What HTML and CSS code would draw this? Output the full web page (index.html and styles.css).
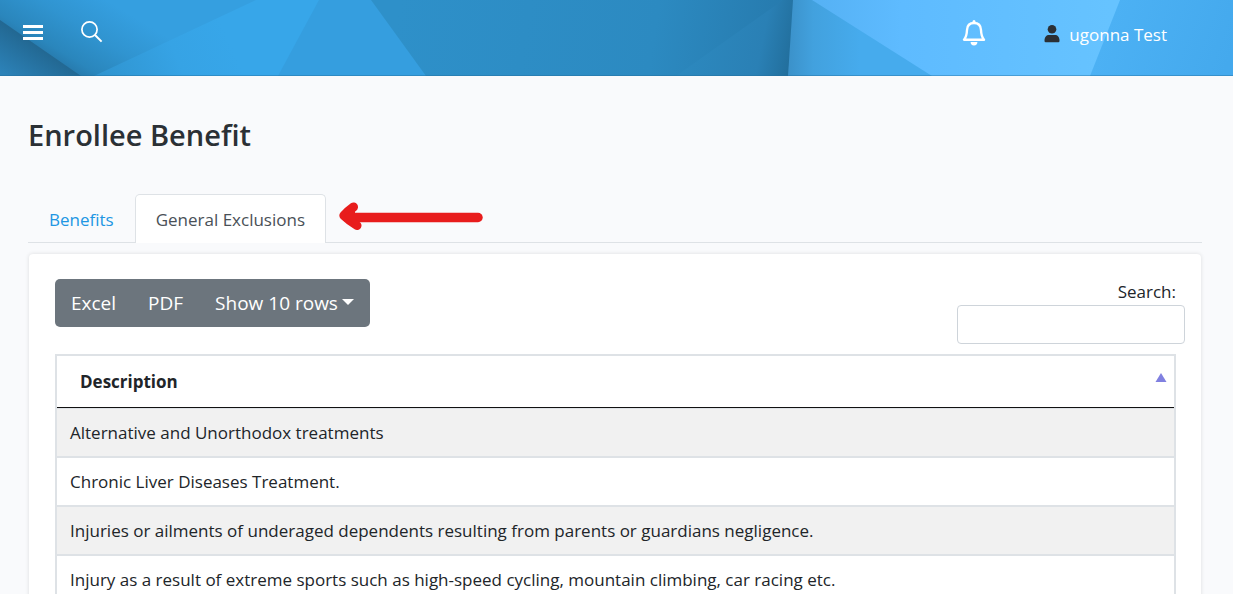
FILE: index.html
```html
<!DOCTYPE html>
<html lang="en">
<head>
<meta charset="utf-8">
<meta name="viewport" content="width=device-width, initial-scale=1">
<title>Enrollee Benefit</title>
<link rel="stylesheet" href="styles.css">
</head>
<body>
<header class="topbar">
  <svg class="topbar-art" viewBox="0 0 1233 76" preserveAspectRatio="none" aria-hidden="true">
    <defs>
      <linearGradient id="left" gradientUnits="userSpaceOnUse" x1="35" y1="62" x2="82" y2="-15">
        <stop offset="0" stop-color="#246e9d"/><stop offset=".25" stop-color="#2a86bc"/><stop offset=".6" stop-color="#3094d0"/><stop offset="1" stop-color="#359fe0"/>
      </linearGradient>
      <linearGradient id="corner" gradientUnits="userSpaceOnUse" x1="40" y1="46" x2="16" y2="82">
        <stop offset="0" stop-color="#226791"/><stop offset="1" stop-color="#2c82b8"/>
      </linearGradient>
      <linearGradient id="bright" gradientUnits="userSpaceOnUse" x1="95" y1="76" x2="220" y2="20">
        <stop offset="0" stop-color="#2f93ce"/><stop offset=".6" stop-color="#36a3e5"/><stop offset="1" stop-color="#37a6e9"/>
      </linearGradient>
      <linearGradient id="mid" gradientUnits="userSpaceOnUse" x1="400" y1="0" x2="790" y2="60">
        <stop offset="0" stop-color="#2e90c9"/><stop offset=".65" stop-color="#2c8ac1"/><stop offset="1" stop-color="#2679ac"/>
      </linearGradient>
      <linearGradient id="fold" gradientUnits="userSpaceOnUse" x1="690" y1="40" x2="790" y2="60">
        <stop offset="0" stop-color="#2c88be"/><stop offset=".7" stop-color="#2a80b5"/><stop offset="1" stop-color="#226f9d"/>
      </linearGradient>
      <linearGradient id="right" gradientUnits="userSpaceOnUse" x1="788" y1="0" x2="860" y2="0">
        <stop offset="0" stop-color="#3b91c9"/><stop offset=".35" stop-color="#42a1de"/><stop offset="1" stop-color="#46abed"/>
      </linearGradient>
      <linearGradient id="sky" gradientUnits="userSpaceOnUse" x1="812" y1="0" x2="1110" y2="0">
        <stop offset="0" stop-color="#55b1f4"/><stop offset=".3" stop-color="#5ebbff"/><stop offset="1" stop-color="#66c3ff"/>
      </linearGradient>
      <linearGradient id="far" gradientUnits="userSpaceOnUse" x1="1100" y1="0" x2="1233" y2="50">
        <stop offset="0" stop-color="#4db2f5"/><stop offset="1" stop-color="#44a9ed"/>
      </linearGradient>
    </defs>
    <path fill="url(#left)" d="M0 0H320V76H0Z"/>
    <path fill="url(#corner)" d="M0 20L81 76H0Z"/>
    <path fill="url(#bright)" d="M256 0H330V76H94Z"/>
    <path fill="#359edf" d="M319 0H390L440 76H278Z"/>
    <path fill="url(#mid)" d="M371 0H794L789 76H426Z"/>
    <path fill="url(#fold)" d="M783 0H794L789 76H676Z"/>
    <path fill="url(#right)" d="M793 0H1233V76H788Z"/>
    <path fill="url(#sky)" d="M812 0H1120V76H932Z"/>
    <path fill="url(#far)" d="M1120 0H1233V76H1090Z"/>
    <path fill="#246b98" fill-opacity=".4" d="M0 75H1233V76H0Z"/>
  </svg>
  <div class="topbar-group">
    <button class="icon-button" type="button" aria-label="Menu">
      <svg width="20" height="16" viewBox="0 0 20 16" fill="#fff"><path d="M0 0H20V3H0ZM0 6H20V9H0ZM0 12H20V15H0Z"/></svg>
    </button>
    <button class="icon-button" type="button" aria-label="Search">
      <svg width="22" height="24" viewBox="0 0 22 24" fill="none" stroke="#fff"><circle cx="8.500" cy="8.500" r="7.600" stroke-width="1.700"/><path d="M14 14L20.600 20.600" stroke-width="2"/></svg>
    </button>
  </div>
  <div class="topbar-group topbar-user">
    <button class="icon-button" type="button" aria-label="Notifications">
      <svg width="24" height="26" viewBox="0 0 24 26"><path d="M12 3C7.500 3 5.200 6 5 10C4.800 15 4 17.500 2 19.700H22C20 17.500 19.200 15 19 10C18.800 6 16.500 3 12 3Z" fill="none" stroke="#fff" stroke-width="2.400" stroke-linejoin="round"/><path d="M10.500 3V1.500A1.500 1.500 0 0 1 13.500 1.500V3ZM8.600 22H15.400A3.400 3.400 0 0 1 8.600 22Z" fill="#fff"/></svg>
    </button>
    <a class="user-link" href="#">
      <svg width="16" height="18" viewBox="0 0 16 18" fill="#2b3035"><circle cx="8" cy="4.300" r="4.300"/><path d="M.5 15.500C.5 12 2.500 10 5 10H11C13.500 10 15.500 12 15.500 15.500V16Q15.500 17.200 14.300 17.200H1.700Q.5 17.200 .5 16Z"/></svg>
      <span>ugonna Test</span>
    </a>
  </div>
</header>

<main class="page">
  <h1 class="title">Enrollee Benefit</h1>
  <nav class="tabs" aria-label="Benefit sections">
    <a class="tab" href="#">Benefits</a>
    <a class="tab tab-active" href="#" aria-current="page">General Exclusions</a>
    <svg class="pointer" width="144" height="32" viewBox="0 0 144 32" fill="none" stroke="#e81c1c" stroke-linecap="round" stroke-linejoin="round"><path d="M8 15.500H139" stroke-width="9.500"/><path d="M14.500 5Q9 9 4.800 13.500Q10 18.500 18 23.500" stroke-width="9"/><path fill="#e81c1c" stroke="none" d="M5 14L16 6V23Z"/></svg>
  </nav>

  <section class="card">
    <div class="toolbar">
      <div class="button-group">
        <button class="tool" type="button">Excel</button>
        <button class="tool" type="button">PDF</button>
        <button class="tool tool-menu" type="button">Show 10 rows</button>
      </div>
      <div class="search">
        <label class="search-label" for="search">Search:</label>
        <input class="search-input" id="search" type="search">
      </div>
    </div>
    <table class="table">
      <thead>
        <tr><th scope="col" aria-sort="ascending"><div class="heading"><span>Description</span><svg class="sort" width="12" height="9" viewBox="0 0 12 9" fill="#8080e0"><path d="M6 0L11.500 9H.5Z"/></svg></div></th></tr>
      </thead>
      <tbody>
        <tr><td>Alternative and Unorthodox treatments</td></tr>
        <tr><td>Chronic Liver Diseases Treatment.</td></tr>
        <tr><td>Injuries or ailments of underaged dependents resulting from parents or guardians negligence.</td></tr>
        <tr><td>Injury as a result of extreme sports such as high-speed cycling, mountain climbing, car racing etc.</td></tr>
      </tbody>
    </table>
  </section>
</main>
</body>
</html>
```
FILE: styles.css
```css
* { box-sizing: border-box; }

body {
  margin: 0;
  background: #f9fafc;
  color: #212529;
  font-family: "Open Sans", "Noto Sans", sans-serif;
  font-size: 17px;
  line-height: 27px;
}

/* The page scrolls without a visible scrollbar. */
html { scrollbar-width: none; }

button { font: inherit; cursor: pointer; }
a { text-decoration: none; }
svg { display: block; flex: none; }

.topbar {
  position: relative;
  display: flex;
  justify-content: space-between;
  height: 76px;
  padding: 0 66px 10px 23px;
}
.topbar-art {
  position: absolute;
  inset: 0;
  width: 100%;
  height: 100%;
}
.topbar-group {
  position: relative;
  display: flex;
  align-items: center;
  gap: 38px;
}
.topbar-user { gap: 58px; }
.icon-button {
  padding: 0;
  border: 0;
  background: none;
}
.user-link {
  display: flex;
  align-items: center;
  gap: 9px;
  padding-top: 2px;
  color: #fff;
}

.page { padding: 37px 31px 0 28px; }
.title {
  margin: 0;
  color: #2b3035;
  font-size: 29px;
  font-weight: 600;
  line-height: 44px;
}

.tabs {
  display: flex;
  align-items: center;
  margin-top: 37px;
  border-bottom: 1px solid #dee2e6;
}
.tab {
  margin-bottom: -1px;
  padding: 11px 20px 10px;
  border: 1px solid transparent;
  border-bottom: 0;
  border-radius: 5px 5px 0 0;
  color: #2196e3;
}
.tab-active {
  border-color: #dee2e6;
  background: #fff;
  color: #495057;
}
.pointer { margin-left: 13px; }

.card {
  margin: 11px 1px 0;
  padding: 25px 25px 32px 26px;
  border-radius: 4px;
  background: #fff;
  box-shadow: 0 0 4px rgba(0, 0, 0, .12);
}
.toolbar {
  display: flex;
  align-items: flex-start;
  justify-content: space-between;
  margin-bottom: 10px;
}
.button-group {
  display: flex;
  border-radius: 5px;
  background: #6c757d;
}
.tool {
  padding: 10px 16px;
  border: 0;
  background: none;
  color: #fff;
  font-size: 19px;
  line-height: 28px;
}
.tool-menu::after {
  content: "";
  display: inline-block;
  margin-left: 4px;
  border: 6px solid transparent;
  border-top-color: #fff;
  border-bottom: 0;
  vertical-align: 5px;
}
.search {
  display: flex;
  flex-direction: column;
  margin-right: -9px;
}
.search-label {
  padding-right: 9px;
  line-height: 26px;
  text-align: right;
}
.search-input {
  width: 228px;
  height: 39px;
  padding: 6px 12px;
  border: 1px solid #ced4da;
  border-radius: 4px;
  background: #fff;
  font: inherit;
}

.table {
  width: 100%;
  border: 2px solid #dee2e6;
  border-spacing: 0;
}
.table th {
  padding: 12px 7px 12px 23px;
  border-bottom: 1px solid #111;
  font-weight: 700;
  text-align: left;
}
.heading {
  display: flex;
  align-items: flex-start;
  justify-content: space-between;
}
.sort { margin-top: 5px; }
.table td {
  padding: 10px 13px;
  border-bottom: 2px solid #dee2e6;
}
.table tbody tr:nth-child(odd) { background: #f1f1f1; }
.table tbody tr:first-child td { border-top: 1px solid #dee2e6; }
```
